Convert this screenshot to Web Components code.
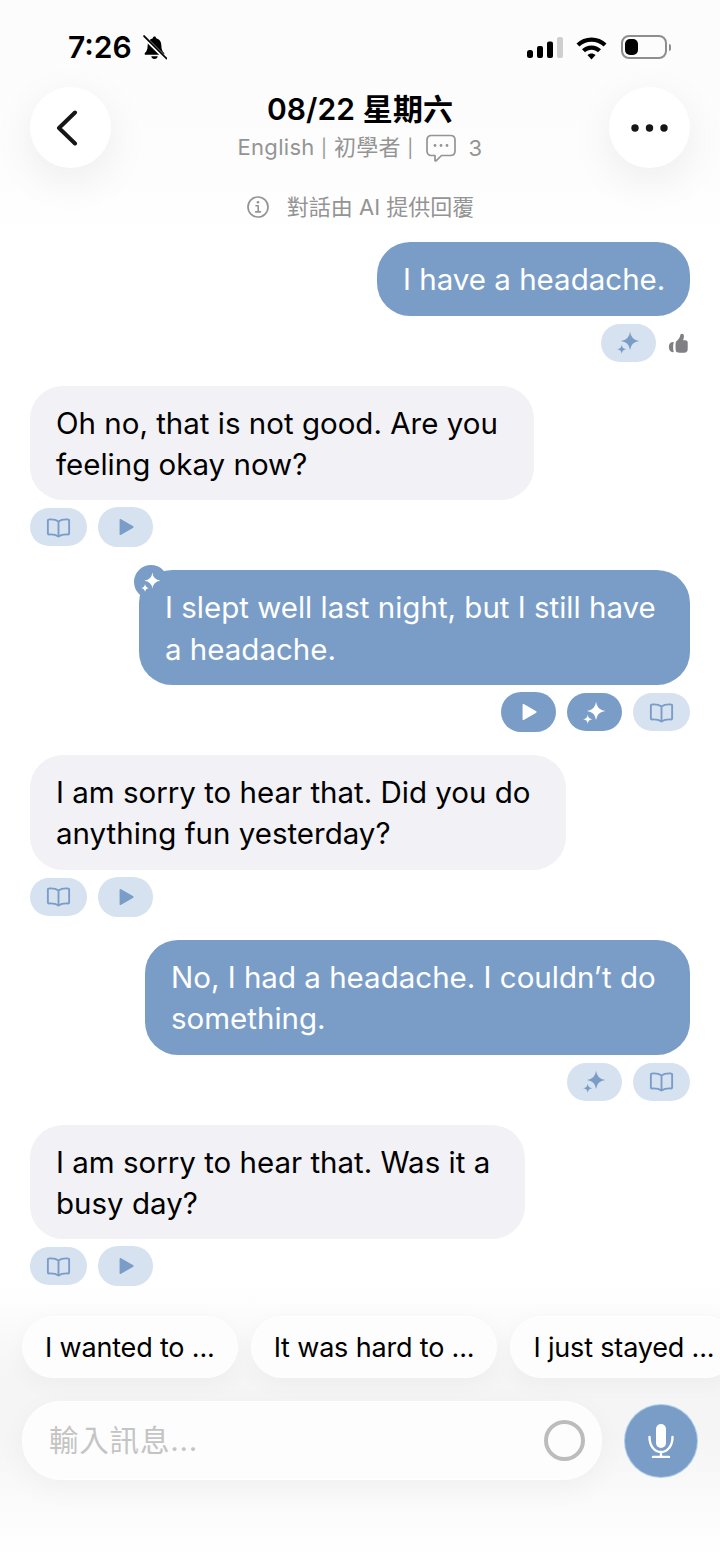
<!DOCTYPE html>
<html lang="zh-Hant">
<head>
<meta charset="utf-8">
<title>Chat</title>
<style>
    html, body { margin: 0; padding: 0; background: #fff; }
    body { font-family: Inter, "Noto Sans CJK TC", sans-serif; color: #000; }
</style>
</head>
<body>
<chat-screen>
    <status-bar slot="top" time="7:26"></status-bar>
    <chat-header slot="top" title="08/22 星期六" level="English | 初學者 |" count="3"></chat-header>
    <ai-notice slot="top">對話由 AI 提供回覆</ai-notice>

    <chat-message mine width="313">
        I have a headache.
        <msg-chip slot="actions" icon="sparkle"></msg-chip>
        <app-icon slot="actions" name="thumb" size="22" style="color:#808084;margin-left:1px"></app-icon>
    </chat-message>
    <chat-message width="504">
        Oh no, that is not good. Are you feeling okay now?
        <msg-chip slot="actions" icon="book"></msg-chip>
        <msg-chip slot="actions" icon="play"></msg-chip>
    </chat-message>
    <chat-message mine badge width="551">
        I slept well last night, but I still have a headache.
        <msg-chip slot="actions" icon="play" dark></msg-chip>
        <msg-chip slot="actions" icon="sparkle" dark></msg-chip>
        <msg-chip slot="actions" icon="book"></msg-chip>
    </chat-message>
    <chat-message width="536">
        I am sorry to hear that. Did you do anything fun yesterday?
        <msg-chip slot="actions" icon="book"></msg-chip>
        <msg-chip slot="actions" icon="play"></msg-chip>
    </chat-message>
    <chat-message mine width="545">
        No, I had a headache. I couldn’t do something.
        <msg-chip slot="actions" icon="sparkle"></msg-chip>
        <msg-chip slot="actions" icon="book"></msg-chip>
    </chat-message>
    <chat-message width="495">
        I am sorry to hear that. Was it a busy day?
        <msg-chip slot="actions" icon="book"></msg-chip>
        <msg-chip slot="actions" icon="play"></msg-chip>
    </chat-message>

    <chat-composer slot="bottom" placeholder="輸入訊息...">
        <suggest-chip slot="suggestions">I wanted to ...</suggest-chip>
        <suggest-chip slot="suggestions">It was hard to ...</suggest-chip>
        <suggest-chip slot="suggestions">I just stayed ...</suggest-chip>
    </chat-composer>
</chat-screen>

<script>
const star = (cx, cy, r) => {
    const k = r * 0.1;
    return `M${cx} ${cy - r}Q${cx + k} ${cy - k} ${cx + r} ${cy}Q${cx + k} ${cy + k} ${cx} ${cy + r}Q${cx - k} ${cy + k} ${cx - r} ${cy}Q${cx - k} ${cy - k} ${cx} ${cy - r}Z`;
};

const icons = {
    sparkle: `<path fill="currentColor" d="${star(13.5, 10.5, 8.8)} ${star(5.5, 18.5, 4.4)}"/>`,
    book: `<path fill="none" stroke="currentColor" stroke-width="1.8" stroke-linejoin="round" stroke-linecap="round" d="M12 6.200C10 4.600 6.600 4 2.600 4.300c-.5 0-.8.4-.8.9v12.600c0 .6.4.9 1 .9 3.600-.2 6.800.2 9.200 2 2.400-1.800 5.600-2.200 9.200-2 .6 0 1-.3 1-.9V5.200c0-.5-.3-.9-.8-.9C17.400 4 14 4.600 12 6.200ZM12 6.200V20.700"/>`,
    play: `<path fill="currentColor" stroke="currentColor" stroke-width="1.600" stroke-linejoin="round" d="M5.800 4 19.500 12 5.800 20Z"/>`,
    thumb: `<path fill="currentColor" d="M8.800 10.300c2.400-1.800 4-3.900 4.500-6.300.2-1.100.7-2 1.900-2 1.500 0 2.300 1.300 2.200 3-.1 1.500-.5 2.800-1 4h2.400c1.700 0 2.700 1 2.700 2.500v7.300c0 2.300-1.400 3.700-3.800 3.700h-5.200c-1.900 0-3.400-.6-3.700-1.300-.4-.9-.6-2.500-.6-4.700 0-2.800.1-4.800.6-6.200ZM3.200 11.500c.9-.6 2-.7 3.200-.4-.6 1.600-.8 3.400-.8 5.500 0 2.100.2 3.900.7 5.300-1.300.3-2.400.1-3.200-.6C1.600 20.100 1 18.300 1 16.300c0-2 .7-3.800 2.200-4.800Z"/>`,
    back: `<path fill="none" stroke="currentColor" stroke-width="4" stroke-linecap="round" stroke-linejoin="round" d="M20 2.500 4 18 20 33.500"/>`,
    dots: `<circle cx="4" cy="12" r="3.700" fill="currentColor"/><circle cx="18.500" cy="12" r="3.700" fill="currentColor"/><circle cx="33" cy="12" r="3.700" fill="currentColor"/>`,
    comment: `<path fill="none" stroke="currentColor" stroke-width="1.700" stroke-linejoin="round" d="M6.500 1.500h19c2.800 0 4.500 1.700 4.500 4.500v11c0 2.800-1.700 4.500-4.500 4.500H16.500l-5.500 5.300c-.4.4-1 .1-1-.4v-4.900H6.500C3.700 21.500 2 19.800 2 17V6c0-2.800 1.700-4.500 4.500-4.500Z"/><circle cx="10" cy="11.500" r="1.400" fill="currentColor"/><circle cx="16" cy="11.500" r="1.400" fill="currentColor"/><circle cx="22" cy="11.500" r="1.400" fill="currentColor"/>`,
    info: `<circle cx="12" cy="12" r="10" fill="none" stroke="currentColor" stroke-width="1.700"/><circle cx="12" cy="7.300" r="1.300" fill="currentColor"/><path fill="none" stroke="currentColor" stroke-width="1.600" stroke-linecap="round" stroke-linejoin="round" d="M10 10.800h2.200v6M9.700 16.900h4.800"/>`,
    mic: `<rect x="8" y="0" width="10" height="24" rx="5" fill="currentColor"/><path fill="none" stroke="currentColor" stroke-width="2.400" stroke-linecap="round" d="M1.500 13c0 9 5 15 11.500 15s11.500-6 11.500-15M13 28v5M5 33h16"/>`,
    bell: `<path fill="currentColor" d="M12 1.500c.9 0 1.500.6 1.600 1.500 3.300.8 5 3.500 5 7.200 0 3.400.9 5.300 2.600 7 .6.700.2 1.800-.8 1.800H3.600c-1 0-1.400-1.100-.8-1.800 1.700-1.700 2.600-3.600 2.600-7 0-3.700 1.700-6.400 5-7.200.1-.9.700-1.500 1.600-1.500ZM9 20.300h6c0 1.600-1.300 2.700-3 2.700s-3-1.100-3-2.700Z"/><path fill="none" stroke="#fdfdfd" stroke-width="3.600" d="M1.500 1.500 23 23"/><path fill="none" stroke="currentColor" stroke-width="1.800" stroke-linecap="round" d="M2 1 23.500 22.500"/>`,
    signal: `<rect x="0" y="13" width="6" height="8" rx="2.500" fill="currentColor"/><rect x="10" y="9" width="6" height="12" rx="2" fill="currentColor"/><rect x="20" y="4.500" width="6" height="16.500" rx="2" fill="currentColor"/><rect x="30" y="0" width="6" height="21" rx="2" fill="#cfcfcf"/>`,
    wifi: `<path fill="currentColor" d="M15.500 2.500c5.800 0 11 2.200 15 5.900l-2.900 3.100c-3.200-3-7.500-4.800-12.100-4.800S6.600 8.500 3.400 11.500L.5 8.400c4-3.700 9.200-5.900 15-5.900Zm0 8c3.700 0 7 1.400 9.500 3.700l-3 3.100c-1.700-1.500-4-2.500-6.500-2.500s-4.800 1-6.500 2.500l-3-3.100c2.500-2.300 5.800-3.700 9.500-3.700Zm0 7.900c1.600 0 3 .6 4.100 1.600l-4.100 4.500-4.100-4.500c1.100-1 2.500-1.600 4.100-1.600Z"/>`
};

// inline svg icon, viewBox picked per icon
const boxes = { back: '0 0 24 36', dots: '0 0 37 24', comment: '0 0 32 28', mic: '0 0 26 34.500', signal: '0 0 36 21', wifi: '0 0 31 25' };

class AppIcon extends HTMLElement {
    connectedCallback() {
        const name = this.getAttribute('name');
        const size = this.getAttribute('size') || 24;
        const h = this.getAttribute('height') || size;
        this.attachShadow({ mode: 'open' }).innerHTML = `
            <style>:host { display: inline-flex; flex: none; } svg { display: block; }</style>
            <svg xmlns="http://www.w3.org/2000/svg" width="${size}" height="${h}" viewBox="${boxes[name] || '0 0 24 24'}">${icons[name]}</svg>`;
    }
}

const statusTemplate = document.createElement('template');
statusTemplate.innerHTML = `
    <style>
        :host { display: flex; align-items: center; height: 40px; padding: 27px 49px 20px 68px; color: #000; }
        .time { font: 600 30px/40px Inter, sans-serif; }
        .left { display: flex; align-items: center; gap: 10px; }
        .right { margin-left: auto; display: flex; align-items: center; gap: 13px; }
        .wifi { margin-right: 1px; }
        .battery { display: flex; align-items: center; }
        .shell { box-sizing: border-box; width: 46px; height: 24px; border: 2px solid #8e8e8e; border-radius: 8px; padding: 2px; }
        .level { width: 13px; height: 16px; background: #000; border-radius: 5px; }
        .nub { width: 2px; height: 7px; background: #8e8e8e; border-radius: 0 2px 2px 0; margin-left: 2px; }
    </style>
    <div class="left"><span class="time"></span><app-icon name="bell" size="25"></app-icon></div>
    <div class="right">
        <app-icon name="signal" size="36" height="23"></app-icon>
        <app-icon class="wifi" name="wifi" size="31" height="25"></app-icon>
        <div class="battery"><div class="shell"><div class="level"></div></div><div class="nub"></div></div>
    </div>`;

class StatusBar extends HTMLElement {
    constructor() {
        super();
        this.attachShadow({ mode: 'open' }).appendChild(statusTemplate.content.cloneNode(true));
    }
    connectedCallback() {
        this.shadowRoot.querySelector('.time').textContent = this.getAttribute('time');
    }
}

const headerTemplate = document.createElement('template');
headerTemplate.innerHTML = `
    <style>
        :host { display: flex; justify-content: space-between; padding: 0 30px; height: 81px; }
        .btn { width: 81px; height: 81px; border-radius: 50%; background: #fff; display: flex; align-items: center; justify-content: center; color: #161616;
               box-shadow: 0 12px 44px rgba(0,0,0,.07); }
        .back { margin-right: 7px; }
        .mid { text-align: center; padding-top: 4px; }
        h1 { margin: 0; font: 600 30px/37px Inter, "Noto Sans CJK TC", sans-serif; letter-spacing: .1px; color: #000; }
        .sub { display: flex; align-items: center; justify-content: center; gap: 11px; height: 34px; margin-top: 3px;
               font: 400 22px/34px Inter, "Noto Sans CJK TC", sans-serif; letter-spacing: .3px; color: #949494; }
        .pipe { font-size: 18px; }
        .count { margin-left: 1px; }
    </style>
    <div class="btn"><app-icon class="back" name="back" size="24" height="36"></app-icon></div>
    <div class="mid">
        <h1></h1>
        <div class="sub"><span class="level"></span><app-icon name="comment" size="32" height="28"></app-icon><span class="count"></span></div>
    </div>
    <div class="btn"><app-icon name="dots" size="37" height="24"></app-icon></div>`;

class ChatHeader extends HTMLElement {
    constructor() {
        super();
        this.attachShadow({ mode: 'open' }).appendChild(headerTemplate.content.cloneNode(true));
    }
    connectedCallback() {
        this.shadowRoot.querySelector('h1').textContent = this.getAttribute('title');
        this.shadowRoot.querySelector('.level').innerHTML = this.getAttribute('level').replaceAll('|', '<span class="pipe">|</span>');
        this.shadowRoot.querySelector('.count').textContent = this.getAttribute('count');
    }
}

class AiNotice extends HTMLElement {
    constructor() {
        super();
        this.attachShadow({ mode: 'open' }).innerHTML = `
            <style>
                :host { display: flex; align-items: center; justify-content: center; gap: 17px; height: 26px; margin: 26px 0 22px;
                        font: 400 22px/26px Inter, "Noto Sans CJK TC", sans-serif; color: #949494; }
            </style>
            <app-icon name="info" size="24"></app-icon><slot></slot>`;
    }
}

const messageTemplate = document.createElement('template');
messageTemplate.innerHTML = `
    <style>
        :host { display: flex; flex-direction: column; align-items: flex-start; }
        :host([mine]) { align-items: flex-end; }
        .bubble { position: relative; box-sizing: border-box; padding: 17px 20px 15.250px 26px; border-radius: 33px; background: #f1f1f6; color: #000;
                  font: 400 29.500px/41.250px Inter, "Noto Sans CJK TC", sans-serif; }
        :host([mine]) .bubble { background: #7a9dc8; color: #fff; }
        .badge { display: none; position: absolute; left: -5px; top: -5px; width: 34px; height: 34px; border-radius: 50%; background: #7a9dc8; color: #fff;
                 align-items: center; justify-content: center; }
        :host([badge]) .badge { display: flex; }
        .actions { display: flex; align-items: center; gap: 11px; margin-top: 8px; min-height: 38px; }
    </style>
    <div class="bubble"><span class="badge"><app-icon name="sparkle" size="22"></app-icon></span><slot></slot></div>
    <div class="actions"><slot name="actions"></slot></div>`;

class ChatMessage extends HTMLElement {
    constructor() {
        super();
        this.attachShadow({ mode: 'open' }).appendChild(messageTemplate.content.cloneNode(true));
    }
    connectedCallback() {
        this.shadowRoot.querySelector('.bubble').style.width = this.getAttribute('width') + 'px';
    }
}

class MsgChip extends HTMLElement {
    connectedCallback() {
        const icon = this.getAttribute('icon');
        this.attachShadow({ mode: 'open' }).innerHTML = `
            <style>
                :host { display: flex; align-items: center; justify-content: center; width: 55px; height: 38px; border-radius: 19px; background: #d6e2ef; color: #7a9dc8; }
                :host([icon=book]) { width: 57px; }
                :host([icon=play]) { height: 40px; margin: -1px 0; border-radius: 20px; }
                :host([dark]) { background: #7a9dc8; color: #fff; }
            </style>
            <app-icon name="${icon}" size="${icon == 'play' ? 22 : 25}"></app-icon>`;
    }
}

class SuggestChip extends HTMLElement {
    constructor() {
        super();
        this.attachShadow({ mode: 'open' }).innerHTML = `
            <style>
                :host { display: block; flex: none; box-sizing: border-box; height: 62px; padding: 1px 22px 0; border-radius: 31px; background: #fdfdfd; border: 1px solid #fff; white-space: nowrap;
                        font: 400 27px/60px Inter, sans-serif; letter-spacing: -0.170px; color: #000; box-shadow: 0 6px 24px rgba(0,0,0,.035); }
            </style>
            <slot></slot>`;
    }
}

const composerTemplate = document.createElement('template');
composerTemplate.innerHTML = `
    <style>
        :host { display: block; padding: 31px 0 78px; overflow: hidden;
                background: linear-gradient(to bottom, rgba(245,245,245,0) 0, #f5f5f5 90px, #f5f5f5 150px, #fff 100%); }
        .row { display: flex; gap: 13px; padding-left: 22px; }
        .bar { display: flex; align-items: center; margin: 23px 0 0 22px; }
        .input { box-sizing: border-box; width: 580px; height: 79px; border-radius: 38px; background: #fdfdfd; border: 1px solid #fff; display: flex; align-items: center; padding: 0 16px 0 26px;
                 font: 400 29.500px Inter, "Noto Sans CJK TC", sans-serif; letter-spacing: .8px; color: #c4c4c4; box-shadow: 0 8px 30px rgba(0,0,0,.04); }
        .ph { margin-top: -6px; }
        .ring { margin-left: auto; box-sizing: border-box; width: 41px; height: 41px; border-radius: 50%; border: 4px solid #bcbcbc; }
        .mic { margin-left: 23px; width: 72px; height: 72px; border-radius: 50%; background: #7a9dc8; box-shadow: 0 0 0 1px #a9cdea; color: #fff; display: flex; align-items: center; justify-content: center; }
    </style>
    <div class="row"><slot name="suggestions"></slot></div>
    <div class="bar">
        <div class="input"><span class="ph"></span><span class="ring"></span></div>
        <div class="mic"><app-icon name="mic" size="26" height="34.500"></app-icon></div>
    </div>`;

class ChatComposer extends HTMLElement {
    constructor() {
        super();
        this.attachShadow({ mode: 'open' }).appendChild(composerTemplate.content.cloneNode(true));
    }
    connectedCallback() {
        this.shadowRoot.querySelector('.ph').textContent = this.getAttribute('placeholder');
    }
}

const screenTemplate = document.createElement('template');
screenTemplate.innerHTML = `
    <style>
        :host { display: flex; flex-direction: column; width: 720px; height: 1558px; overflow: hidden; background: #fff; }
        .top { background: linear-gradient(to bottom, #fcfcfc 0, #fdfdfd 180px, #fff 240px); }
        .thread { flex: none; display: flex; flex-direction: column; gap: 24px; padding: 0 30px; }
    </style>
    <div class="top"><slot name="top"></slot></div>
    <div class="thread"><slot></slot></div>
    <slot name="bottom"></slot>`;

class ChatScreen extends HTMLElement {
    constructor() {
        super();
        this.attachShadow({ mode: 'open' }).appendChild(screenTemplate.content.cloneNode(true));
    }
}

customElements.define('app-icon', AppIcon);
customElements.define('status-bar', StatusBar);
customElements.define('chat-header', ChatHeader);
customElements.define('ai-notice', AiNotice);
customElements.define('chat-message', ChatMessage);
customElements.define('msg-chip', MsgChip);
customElements.define('suggest-chip', SuggestChip);
customElements.define('chat-composer', ChatComposer);
customElements.define('chat-screen', ChatScreen);
</script>
</body>
</html>
